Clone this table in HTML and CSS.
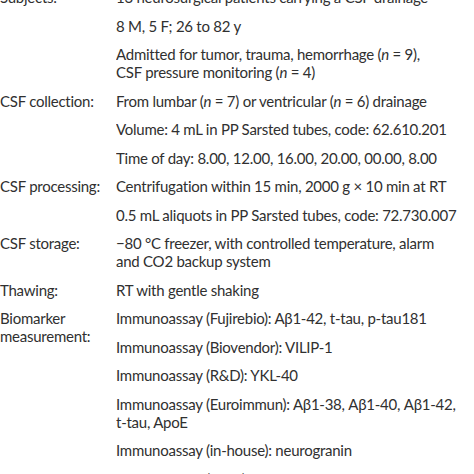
FILE: index.html
```html
<!DOCTYPE html>
<html>
<head>
<meta charset="utf-8">
<link rel="stylesheet" href="styles.css">
</head>
<body>
<div class="table">
  <div class="group">
    <div class="label">Subjects:</div>
    <div class="values">
      <div class="cell">13 neurosurgical patients carrying a CSF drainage</div>
      <div class="cell">8 M, 5 F; 26 to 82 y</div>
      <div class="cell">Admitted for tumor, trauma, hemorrhage (<i>n</i> = 9),<br>CSF pressure monitoring (<i>n</i> = 4)</div>
    </div>
  </div>
  <div class="group">
    <div class="label">CSF collection:</div>
    <div class="values">
      <div class="cell">From lumbar (<i>n</i> = 7) or ventricular (<i>n</i> = 6) drainage</div>
      <div class="cell">Volume: 4 mL in PP Sarsted tubes, code: 62.610.201</div>
      <div class="cell">Time of day: 8.00, 12.00, 16.00, 20.00, 00.00, 8.00</div>
    </div>
  </div>
  <div class="group">
    <div class="label">CSF processing:</div>
    <div class="values">
      <div class="cell">Centrifugation within 15 min, 2000 g × 10 min at RT</div>
      <div class="cell">0.5 mL aliquots in PP Sarsted tubes, code: 72.730.007</div>
    </div>
  </div>
  <div class="group">
    <div class="label">CSF storage:</div>
    <div class="values">
      <div class="cell">−80 °C freezer, with controlled temperature, alarm<br>and CO2 backup system</div>
    </div>
  </div>
  <div class="group">
    <div class="label">Thawing:</div>
    <div class="values">
      <div class="cell">RT with gentle shaking</div>
    </div>
  </div>
  <div class="group">
    <div class="label">Biomarker<br>measurement:</div>
    <div class="values">
      <div class="cell">Immunoassay (Fujirebio): Aβ1-42, t-tau, p-tau181</div>
      <div class="cell">Immunoassay (Biovendor): VILIP-1</div>
      <div class="cell">Immunoassay (R&amp;D): YKL-40</div>
      <div class="cell">Immunoassay (Euroimmun): Aβ1-38, Aβ1-40, Aβ1-42,<br>t-tau, ApoE</div>
      <div class="cell">Immunoassay (in-house): neurogranin</div>
      <div class="cell">Immunoassay (MSD): Aβ<sub>1-38</sub>, Aβ<sub>1-40</sub>, Aβ<sub>1-42</sub>, sAPPα, sAPPβ</div>
    </div>
  </div>
</div>
</body>
</html>
```
FILE: styles.css
```css
html, body {
  margin: 0;
  padding: 0;
  background: #ffffff;
  overflow: hidden;
  width: 474px;
  height: 474px;
}
body {
  font-family: Lato, "Open Sans", sans-serif;
  font-size: 15px;
  letter-spacing: -0.25px;
  line-height: 18px;
  color: #303030;
}
.table {
  margin-top: -17px;
  display: flex;
  flex-direction: column;
}
.group {
  display: grid;
  grid-template-columns: 116px 358px;
}
.label {
  padding: 5.25px 0;
  white-space: nowrap;
}
.values {
  display: flex;
  flex-direction: column;
  overflow: hidden;
}
.cell {
  padding: 5.25px 0;
  white-space: nowrap;
}
sub {
  font-size: 10px;
  line-height: 0;
}
```
